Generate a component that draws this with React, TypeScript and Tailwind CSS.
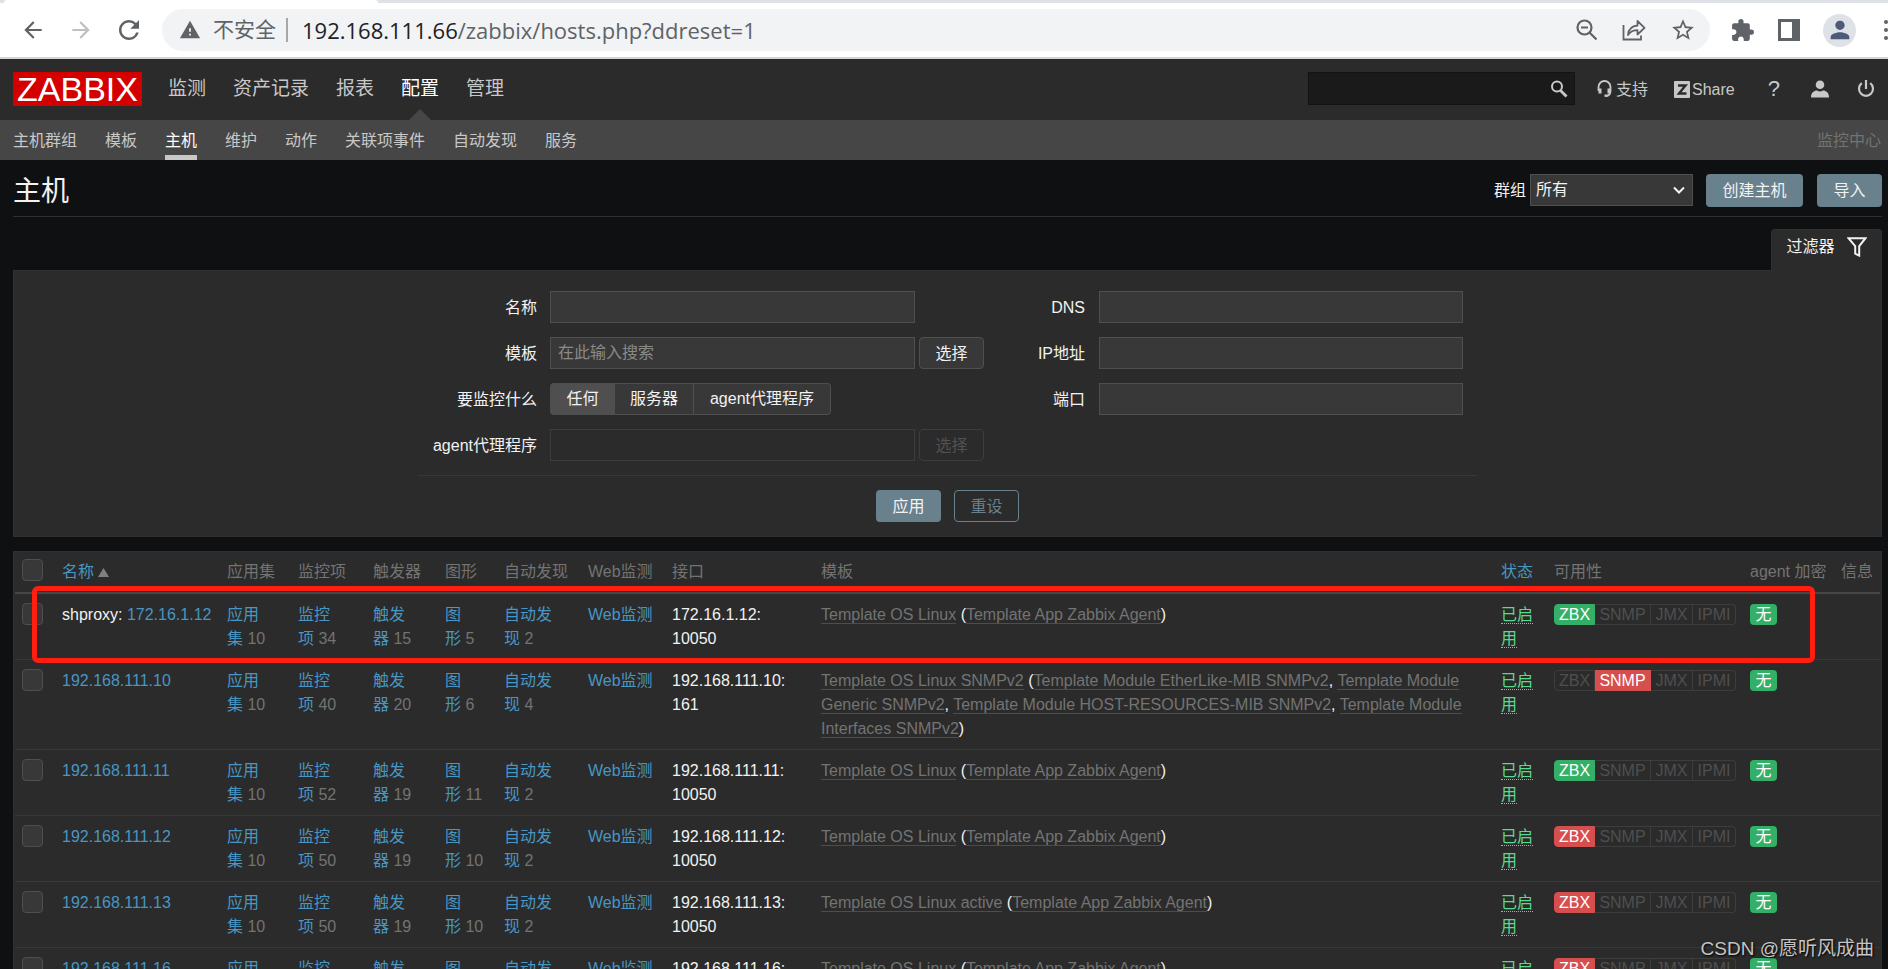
import type { ReactNode } from 'react';
import {
  MdArrowBack,
  MdArrowForward,
  MdRefresh,
  MdWarning,
  MdStarBorder,
  MdExtension,
  MdPerson,
} from 'react-icons/md';

type Tone = 'ok' | 'bad' | 'off';

interface Host {
  prefix?: string;
  name: string;
  items: string;
  triggers: string;
  graphs: string;
  discovery: string;
  port: string;
  template: string;
  nested: string[];
  protocol: 'ZBX' | 'SNMP';
  tone: Tone;
}

const AGENT = ['Template App Zabbix Agent'];

const HOSTS: Host[] = [
  { prefix: 'shproxy', name: '172.16.1.12', items: '34', triggers: '15', graphs: '5', discovery: '2', port: '10050', template: 'Template OS Linux', nested: AGENT, protocol: 'ZBX', tone: 'ok' },
  {
    name: '192.168.111.10', items: '40', triggers: '20', graphs: '6', discovery: '4', port: '161', template: 'Template OS Linux SNMPv2',
    nested: ['Template Module EtherLike-MIB SNMPv2', 'Template Module Generic SNMPv2', 'Template Module HOST-RESOURCES-MIB SNMPv2', 'Template Module Interfaces SNMPv2'],
    protocol: 'SNMP', tone: 'bad',
  },
  { name: '192.168.111.11', items: '52', triggers: '19', graphs: '11', discovery: '2', port: '10050', template: 'Template OS Linux', nested: AGENT, protocol: 'ZBX', tone: 'ok' },
  { name: '192.168.111.12', items: '50', triggers: '19', graphs: '10', discovery: '2', port: '10050', template: 'Template OS Linux', nested: AGENT, protocol: 'ZBX', tone: 'bad' },
  { name: '192.168.111.13', items: '50', triggers: '19', graphs: '10', discovery: '2', port: '10050', template: 'Template OS Linux active', nested: AGENT, protocol: 'ZBX', tone: 'bad' },
  { name: '192.168.111.16', items: '50', triggers: '19', graphs: '10', discovery: '2', port: '10050', template: 'Template OS Linux', nested: AGENT, protocol: 'ZBX', tone: 'bad' },
];

const MENU = ['监测', '资产记录', '报表', '配置', '管理'];
const SUBMENU = ['主机群组', '模板', '主机', '维护', '动作', '关联项事件', '自动发现', '服务'];

function BrowserBar() {
  return (
    <div className="border-b-2 border-[#d6d6d9] bg-white">
      <div className="h-[3px] bg-[#dee1e6] pl-1">
        <div className="h-[3px] w-[374px] rounded-t bg-white" />
      </div>
      <div className="flex h-[54px] items-center overflow-hidden pl-5 text-[#5f6368]">
        <button aria-label="后退"><MdArrowBack size={26} /></button>
        <button aria-label="前进" className="ml-[22px] text-[#bdc1c6]"><MdArrowForward size={26} /></button>
        <button aria-label="刷新" className="ml-[20px]"><MdRefresh size={30} /></button>
        <div className="ml-[18px] flex h-[42px] flex-1 items-center rounded-full bg-[#f1f3f4] pl-[17px] pr-[14px]">
          <MdWarning size={22} />
          <span className="ml-3 text-[21px] leading-6">不安全</span>
          <span className="ml-[10px] h-6 w-[2px] bg-[#a5a8ab]" />
          <span className="ml-[14px] font-['Open_Sans','Noto_Sans',sans-serif] text-[22px] leading-7">
            <span className="text-[#202124]">192.168.111.66</span>/zabbix/hosts.php?ddreset=1
          </span>
          <div className="ml-auto flex items-center gap-6">
            <button aria-label="缩放">
              <svg width="22" height="22" viewBox="0 0 22 22" fill="none" stroke="currentColor" strokeWidth="2.2">
                <circle cx="8.5" cy="8.5" r="7" />
                <path d="M5 8.5h7M13.5 13.5l7 7" />
              </svg>
            </button>
            <button aria-label="分享">
              <svg width="24" height="24" viewBox="0 0 24 24" fill="none" stroke="currentColor" strokeWidth="1.8">
                <path d="M1.5 7v14.5h17.5v-4" />
                <path d="M6 17c.5-6 3.500-9 9.500-9.500V3l7 6.800-7 6.700v-4.300c-4.500 0-7.200 1.500-9.500 4.800z" strokeLinejoin="round" />
              </svg>
            </button>
            <button aria-label="收藏"><MdStarBorder size={26} /></button>
          </div>
        </div>
        <div className="ml-5 flex items-center gap-[22px]">
          <button aria-label="扩展程序"><MdExtension size={25} /></button>
          <button aria-label="侧边栏">
            <svg width="24" height="22" viewBox="0 0 24 22">
              <path fill="currentColor" fillRule="evenodd" d="M1 0h22v22H1zM4 3v16h11V3z" />
            </svg>
          </button>
          <button aria-label="用户" className="flex size-[33px] items-center justify-center rounded-full bg-[#dee1e6] text-[#4d5b78]">
            <MdPerson size={28} />
          </button>
        </div>
        <button aria-label="菜单" className="ml-7 flex w-1 shrink-0 flex-col gap-1">
          <span className="size-1 rounded-full bg-[#5f6368]" />
          <span className="size-1 rounded-full bg-[#5f6368]" />
          <span className="size-1 rounded-full bg-[#5f6368]" />
        </button>
      </div>
    </div>
  );
}

function Header() {
  return (
    <header className="flex h-[61px] items-center bg-[#2b2b2b] px-[13px] pb-[2px] text-[#c8c8c8]">
      <a href="#" className="flex h-[34px] w-[129px] items-center justify-center bg-[#d40000] text-[34px] leading-8 text-white">ZABBIX</a>
      <nav className="ml-[26px] flex h-full gap-[27px] text-[19px]">
        {MENU.map((label) => (
          <a key={label} href="#" className={label === '配置' ? 'relative flex items-center text-white' : 'flex items-center'}>
            {label}
            {label === '配置' && (
              <svg className="absolute -bottom-[2px] left-2" width="22" height="11" viewBox="0 0 22 11"><path d="M0 11L11 0l11 11z" fill="#464646" /></svg>
            )}
          </a>
        ))}
      </nav>
      <div className="ml-auto flex h-[33px] w-[267px] items-center border border-[#131313] bg-[#1a1a1a] pr-[6px]">
        <input aria-label="搜索" className="min-w-0 flex-1 bg-transparent px-2 outline-none" />
        <button aria-label="搜索">
          <svg width="18" height="18" viewBox="0 0 18 18" fill="none" stroke="currentColor">
            <circle cx="7" cy="6.500" r="5" strokeWidth="2" />
            <path d="M10.500 10.500l6 6" strokeWidth="2.800" />
          </svg>
        </button>
      </div>
      <a href="#" className="ml-[22px] flex items-center gap-1">
        <svg width="15" height="17" viewBox="0 0 15 17" fill="none" stroke="currentColor">
          <path d="M1.500 11V7a6 6 0 0112 0v4c0 3-1.500 4.500-4 5" strokeWidth="1.800" />
          <path d="M3 8.500v5M12 8.500v5" strokeWidth="3" />
          <path d="M7.500 15.700h3" strokeWidth="2.400" />
        </svg>
        <span className="pt-0.5">支持</span>
      </a>
      <a href="#" className="ml-[26px] flex items-center gap-[2px] pt-0.5">
        <svg width="16" height="17" viewBox="0 0 16 17">
          <rect width="16" height="17" rx="1" fill="currentColor" />
          <path d="M4 4.500h7.500L5 12.500h7.500" fill="none" stroke="#2b2b2b" strokeWidth="2.400" />
        </svg>
        Share
      </a>
      <a href="#" className="ml-[33px] text-[22px] leading-6">?</a>
      <a href="#" aria-label="用户资料" className="ml-[31px]">
        <svg width="18" height="18" viewBox="0 0 18 18" fill="currentColor">
          <circle cx="9" cy="4.800" r="4.300" />
          <path d="M0 17.500c0-5 3-7 6-7 1 .7 2 1 3 1s2-.3 3-1c3 0 6 2 6 7z" />
        </svg>
      </a>
      <a href="#" aria-label="退出" className="ml-7">
        <svg width="18" height="18" viewBox="0 0 18 18" fill="none" stroke="currentColor" strokeWidth="2.200">
          <path d="M9 0v9M4.800 3.200a7 7 0 108.400 0" />
        </svg>
      </a>
    </header>
  );
}

function Submenu() {
  return (
    <nav className="flex h-10 items-center gap-7 bg-[#464646] pl-[13px] pr-[7px] text-[#c8c8c8]">
      {SUBMENU.map((label) => (
        <a
          key={label}
          href="#"
          className={
            label === '主机'
              ? 'flex h-full items-center border-b-[5px] border-[#c8c8c8] pt-[7px] text-white'
              : 'flex h-full items-center pt-0.5'
          }
        >
          {label}
        </a>
      ))}
      <span className="ml-auto pt-0.5 text-[#737373]">监控中心</span>
    </nav>
  );
}

const FIELD = 'block h-8 min-w-0 w-full border border-[#4f4f4f] bg-[#383838] px-[7px] text-[#f2f2f2] outline-none placeholder:text-[#8a8a8a]';
const LABEL = 'pt-0.5 text-right';
const PRIMARY = 'rounded-sm bg-[#69808d] pt-0.5 text-[#f2f2f2]';

function Filter() {
  return (
    <section>
      <div className="flex justify-end">
        <button className="-mb-px flex h-[42px] w-[111px] items-center justify-center gap-3 rounded-t-sm border border-b-0 border-[#303030] bg-[#2b2b2b] pb-2">
          过滤器
          <svg width="20" height="20" viewBox="0 0 20 20" fill="none" stroke="currentColor" strokeWidth="2">
            <path d="M1.500 1.200h17L12.200 9.200v9.400l-4-2V9.200z" />
          </svg>
        </button>
      </div>
      <form className="border border-[#303030] bg-[#2b2b2b] pb-[14px] pt-5" onSubmit={(e) => e.preventDefault()}>
        <div className="mx-auto max-w-[1059px]">
          <div className="flex">
            <div className="grid flex-1 grid-cols-[119px_1fr_65px] items-center gap-y-[14px]">
              <label htmlFor="name" className={LABEL}>名称</label>
              <div className="ml-[13px] mr-1"><input id="name" className={FIELD} /></div>
              <span />
              <label htmlFor="template" className={LABEL}>模板</label>
              <div className="ml-[13px] mr-1"><input id="template" placeholder="在此输入搜索" className={FIELD} /></div>
              <button type="button" className="h-8 rounded-sm border border-[#4f4f4f] bg-[#383838] pt-0.5">选择</button>
              <span className={LABEL}>要监控什么</span>
              <div className="col-span-2 ml-[13px] flex h-8" role="group" aria-label="要监控什么">
                <button type="button" className="w-[65px] rounded-l-sm bg-[#4f4f4f]">任何</button>
                <button type="button" className="w-[79px] border-y border-r border-[#4f4f4f] bg-[#383838]">服务器</button>
                <button type="button" className="w-[137px] rounded-r-sm border-y border-r border-[#4f4f4f] bg-[#383838]">agent代理程序</button>
              </div>
              <label htmlFor="proxy" className={LABEL}>agent代理程序</label>
              <div className="ml-[13px] mr-1"><input id="proxy" disabled className="block h-8 w-full border border-[#3d3d3d] bg-transparent" /></div>
              <button type="button" disabled className="h-8 rounded-sm border border-[#3d3d3d] pt-0.5 text-[#525252]">选择</button>
            </div>
            <div className="mr-[14px] grid w-[479px] grid-cols-[101px_1fr] content-start items-center gap-x-[14px] gap-y-[14px]">
              <label htmlFor="dns" className={LABEL}>DNS</label>
              <input id="dns" className={FIELD} />
              <label htmlFor="ip" className={LABEL}>IP地址</label>
              <input id="ip" className={FIELD} />
              <label htmlFor="port" className={LABEL}>端口</label>
              <input id="port" className={FIELD} />
            </div>
          </div>
          <div className="mt-[14px] flex justify-center gap-[13px] border-t border-[#383838] pt-[14px]">
            <button type="submit" className={`h-8 w-[65px] ${PRIMARY}`}>应用</button>
            <button type="reset" className="h-8 w-[65px] rounded-sm border border-[#69808d] pt-0.5 text-[#69808d]">重设</button>
          </div>
        </div>
      </form>
    </section>
  );
}

function Check({ label }: { label: string }) {
  return (
    <input
      type="checkbox"
      aria-label={label}
      className="block h-[22px] w-[21px] appearance-none rounded-sm border border-[#4f4f4f] bg-[#383838]"
    />
  );
}

function CountLink({ first, rest, count }: { first: string; rest: string; count: string }) {
  return (
    <td className={CELL}>
      <a href="#" className="text-[#4796c4]">{first}<br />{rest}</a> {count}
    </td>
  );
}

function TemplateLink({ children }: { children: ReactNode }) {
  return <a href="#" className="border-b border-[#47504f] text-[#737373]">{children}</a>;
}

const CELL = 'px-[7px] pt-[9px] pb-2';
const TONES: Record<Tone, string> = {
  ok: 'bg-[#34af67] border-[#34af67] text-white',
  bad: 'bg-[#d64e4e] border-[#d64e4e] text-white',
  off: 'border-[#3d3d3d] text-[#4f4f4f]',
};
const PROTOCOLS = [
  { label: 'ZBX', size: 'w-[41px] rounded-l-sm border-l' },
  { label: 'SNMP', size: 'w-14' },
  { label: 'JMX', size: 'w-[42px]' },
  { label: 'IPMI', size: 'w-[43px] rounded-r-sm' },
];
const COLUMNS = ['w-10', 'w-[165px]', 'w-[71px]', 'w-[75px]', 'w-[72px]', 'w-[59px]', 'w-[84px]', 'w-[84px]', 'w-[149px]', '', 'w-[53px]', 'w-[196px]', 'w-[91px]', 'w-[46px]'];
const HEADS = ['应用集', '监控项', '触发器', '图形', '自动发现', 'Web监测', '接口', '模板'];

function HostRow({ host }: { host: Host }) {
  return (
    <tr className="border-b border-[#383838] align-top text-[#737373]">
      <td className={CELL}><Check label={host.name} /></td>
      <td className={`${CELL} whitespace-nowrap`}>
        {host.prefix && <span className="text-[#f2f2f2]">{host.prefix}: </span>}
        <a href="#" className="text-[#4796c4]">{host.name}</a>
      </td>
      <CountLink first="应用" rest="集" count="10" />
      <CountLink first="监控" rest="项" count={host.items} />
      <CountLink first="触发" rest="器" count={host.triggers} />
      <CountLink first="图" rest="形" count={host.graphs} />
      <CountLink first="自动发" rest="现" count={host.discovery} />
      <td className={`${CELL} whitespace-nowrap`}><a href="#" className="text-[#4796c4]">Web监测</a></td>
      <td className={`${CELL} text-[#f2f2f2]`}>{host.name}:<br />{host.port}</td>
      <td className={`${CELL} text-[#f2f2f2]`}>
        <TemplateLink>{host.template}</TemplateLink> (
        {host.nested.map((name, i) => (
          <span key={name}>{i > 0 && ', '}<TemplateLink>{name}</TemplateLink></span>
        ))}
        )
      </td>
      <td className={CELL}><a href="#" className="border-b border-dotted border-[#59db8f] text-[#59db8f]">已启用</a></td>
      <td className={CELL}>
        <div className="mt-px flex h-[21px] leading-5">
          {PROTOCOLS.map(({ label, size }) => (
            <span key={label} className={`flex items-center justify-center border-y border-r ${size} ${TONES[label === host.protocol ? host.tone : 'off']}`}>
              {label}
            </span>
          ))}
        </div>
      </td>
      <td className={CELL}>
        <span className="mt-px flex h-[21px] w-[27px] items-center justify-center rounded-sm bg-[#34af67] leading-5 text-white">无</span>
      </td>
      <td className={CELL} />
    </tr>
  );
}

function HostTable() {
  return (
    <div className="relative mt-[14px] border border-[#303030] bg-[#2b2b2b] px-px">
      <table className="w-full table-fixed border-collapse text-left">
        <colgroup>
          {COLUMNS.map((width, i) => <col key={i} className={width} />)}
        </colgroup>
        <thead>
          <tr className="h-[41px] border-b-2 border-[#464646] text-[#737373] [&>th]:whitespace-nowrap [&>th]:px-[7px] [&>th]:font-normal">
            <th className="pb-1"><Check label="全选" /></th>
            <th>
              <a href="#" className="flex items-center gap-1 text-[#4796c4]">
                名称
                <svg width="11" height="9" viewBox="0 0 11 9"><path d="M0 9L5.500 0 11 9z" fill="#808080" /></svg>
              </a>
            </th>
            {HEADS.map((label) => <th key={label}>{label}</th>)}
            <th><a href="#" className="text-[#4796c4]">状态</a></th>
            <th>可用性</th>
            <th>agent 加密</th>
            <th>信息</th>
          </tr>
        </thead>
        <tbody>
          {HOSTS.map((host) => <HostRow key={host.name} host={host} />)}
        </tbody>
      </table>
      <div className="pointer-events-none absolute left-[18px] right-[66px] top-[34px] h-[77px] rounded-md border-[5px] border-[#ff1e10]" />
    </div>
  );
}

export default function App() {
  return (
    <div className="relative h-screen overflow-hidden bg-[#0e1012] font-['Liberation_Sans','Noto_Sans_CJK_SC',sans-serif] text-[16px] leading-6 text-[#f2f2f2]">
      <BrowserBar />
      <Header />
      <Submenu />
      <main className="pl-[13px] pr-[6px]">
        <div className="flex h-[57px] items-center border-b border-[#303030] pt-1">
          <h1 className="pt-1 text-[28px] leading-9">主机</h1>
          <label htmlFor="group" className="ml-auto pt-0.5">群组</label>
          <div className="relative ml-1">
            <select id="group" className="block h-8 w-[163px] appearance-none border border-[#4f4f4f] bg-[#383838] px-[5px] text-[#f2f2f2]">
              <option>所有</option>
            </select>
            <svg className="pointer-events-none absolute right-2 top-3" width="12" height="9" viewBox="0 0 12 9" fill="none" stroke="#f2f2f2" strokeWidth="2">
              <path d="M1 1.500l5 5 5-5" />
            </svg>
          </div>
          <button className={`ml-[13px] h-[33px] w-[97px] ${PRIMARY}`}>创建主机</button>
          <button className={`ml-[14px] h-[33px] w-[65px] ${PRIMARY}`}>导入</button>
        </div>
        <div className="mt-3">
          <Filter />
        </div>
        <HostTable />
      </main>
      <div className="absolute bottom-1 right-[14px] text-[19px] leading-8 text-[#c4c4c4] [text-shadow:1px_1px_2px_#000]">CSDN @愿听风成曲</div>
    </div>
  );
}
